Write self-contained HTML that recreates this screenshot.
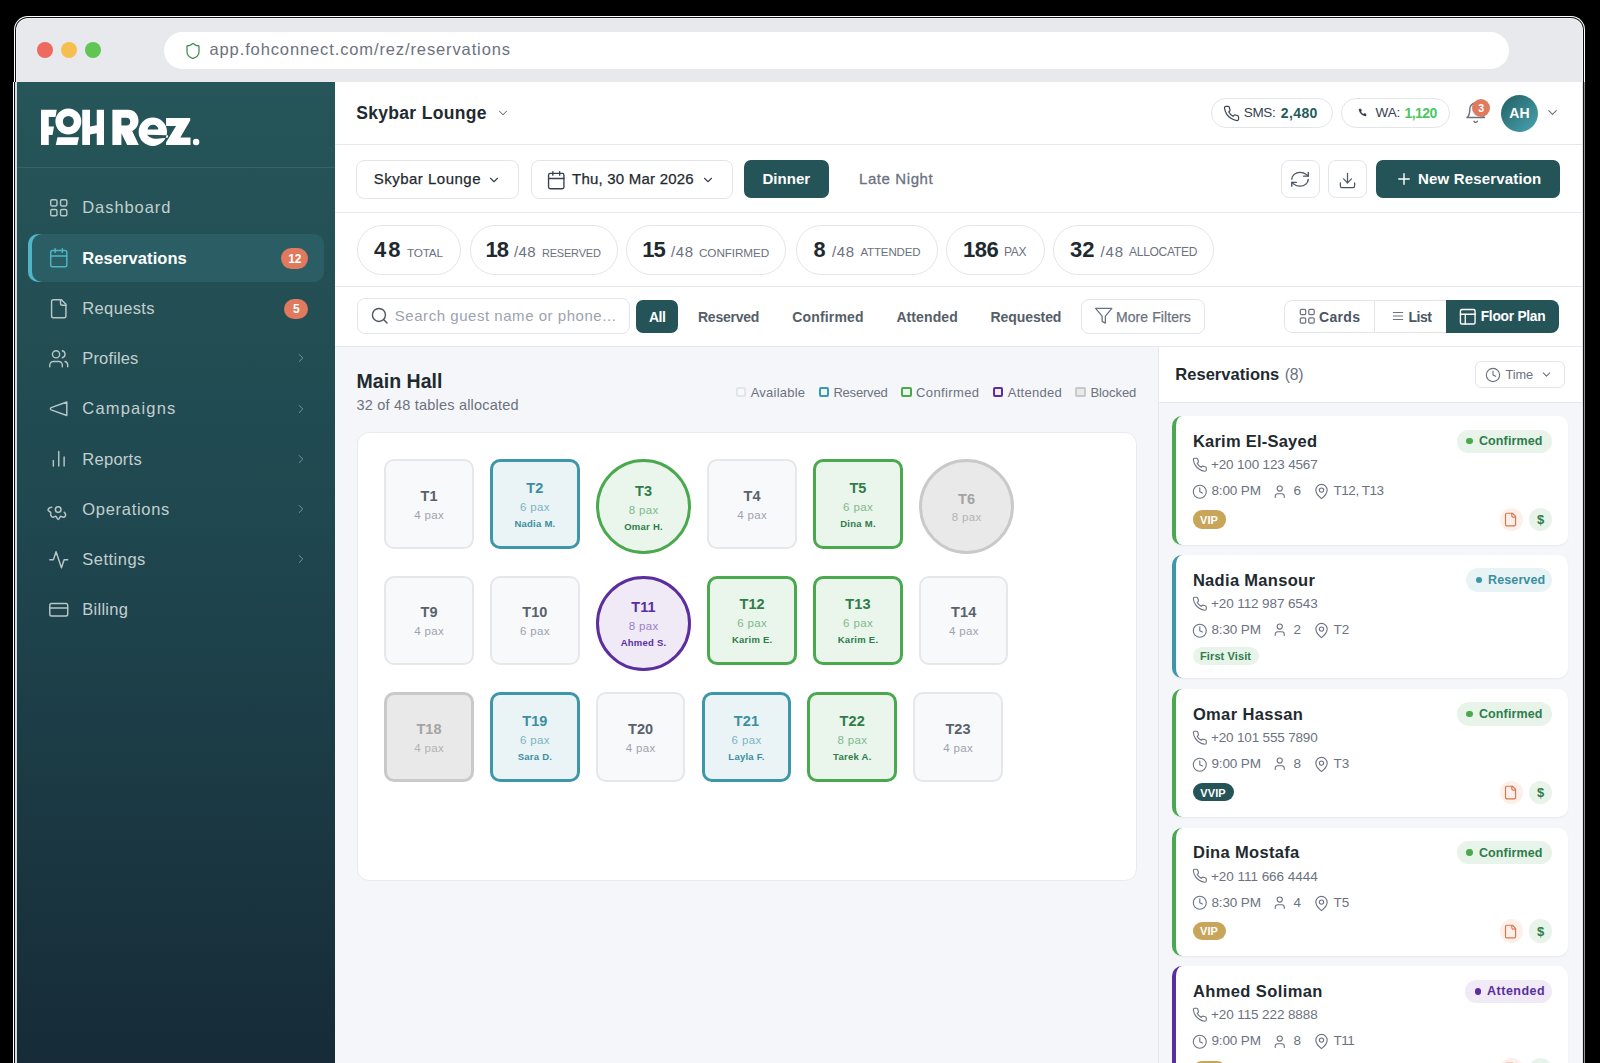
<!DOCTYPE html>
<html><head><meta charset="utf-8"><style>
html,body{margin:0;padding:0;}
body{width:1600px;height:1063px;overflow:hidden;background:#000;position:relative;font-family:"Liberation Sans", sans-serif;}
.t{position:absolute;white-space:nowrap;}
.b{position:absolute;}
svg.b{overflow:visible;}
</style></head><body>
<div class="b" style="left:14px;top:16px;width:1571px;height:1100px;border-radius:14px 14px 0 0;background:#fff;"></div>
<div class="b" style="left:15px;top:17px;width:1569px;height:1100px;border-radius:13px 13px 0 0;background:#111;"></div>
<div class="b" style="left:16px;top:18px;width:1567px;height:1100px;border-radius:12px 12px 0 0;background:#f1f2f5;"></div>
<div class="b" style="left:17px;top:19px;width:1565px;height:1100px;border-radius:11px 11px 0 0;background:#e8e9ed;"></div>
<div class="b" style="left:13px;top:82px;width:1px;height:1000px;background:#fff;"></div>
<div class="b" style="left:14px;top:82px;width:1px;height:1000px;background:#111;"></div>
<div class="b" style="left:15px;top:82px;width:2px;height:1000px;background:#d9dae3;"></div>
<div class="b" style="left:1584px;top:82px;width:1px;height:1000px;background:#9a9a9a;"></div>
<div class="b" style="left:1583px;top:82px;width:1px;height:1000px;background:#111;"></div>
<div class="b" style="left:1582px;top:82px;width:1px;height:1000px;background:#e3e5ea;"></div>
<div class="b" style="left:37px;top:42.4px;width:16px;height:16px;border-radius:50%;background:#ee6a5f;"></div>
<div class="b" style="left:61px;top:42.4px;width:16px;height:16px;border-radius:50%;background:#f5be4f;"></div>
<div class="b" style="left:85px;top:42.4px;width:16px;height:16px;border-radius:50%;background:#61c554;"></div>
<div class="b" style="left:164.2px;top:31.7px;width:1344.6px;height:37.4px;border-radius:18.7px;background:#fff;"></div>
<svg class="b" style="left:184px;top:42.2px;" width="18" height="18" viewBox="0 0 24 24" fill="none" stroke="#3f8f52" stroke-width="1.7" stroke-linecap="round" stroke-linejoin="round"><path d="M20 13c0 5-3.5 7.5-7.66 8.95a1 1 0 0 1-.67-.01C7.5 20.5 4 18 4 13V6a1 1 0 0 1 1-1c2 0 4.5-1.2 6.24-2.72a1.17 1.17 0 0 1 1.52 0C14.51 3.81 17 5 19 5a1 1 0 0 1 1 1z"/></svg>
<div class="t" style="left:209.50px;top:38.78px;font-size:16.5px;line-height:21px;color:#6b7280;font-weight:400;letter-spacing:0.881px;">app.fohconnect.com/rez/reservations</div>
<div class="b" style="left:17px;top:82px;width:318px;height:1000px;background:linear-gradient(180deg,#265659 0%,#1f474f 45%,#162a37 100%);"></div>
<div class="b" style="left:17px;top:167px;width:318px;height:1px;background:rgba(255,255,255,0.09);"></div>
<svg class="b" style="left:41px;top:109px" width="160" height="37" viewBox="0 0 160 37">
<g fill="#fff" fill-rule="evenodd">
<path d="M0 0.75H15.75L14.5 8H7.75V17.5H13L11.5 26H7.75V36H0Z"/>
<path d="M27.35 -0.45a12.95 12.95 0 1 1 0 25.9a12.95 12.95 0 1 1 0-25.9ZM27.35 7a5.5 5.5 0 1 0 0 11a5.5 5.5 0 1 0 0-11Z"/>
<path d="M16.5 28.25H38L36.25 36H14.75Z"/>
<path d="M41.25 0.75H49V17.5L55.75 16.3V0.75H63V36H55.75V24.3L49 25.5V36H41.25Z"/>
<path d="M71.4 0.7H87C93.5 0.7 97.5 5.5 97.5 12C97.5 16.5 95 20.3 91.2 22L97.8 36H86.2L80.4 24.3V36H71.4ZM80.4 8.8H85.3C87.9 8.8 89.2 10.4 89.2 12.7C89.2 15 87.9 16.6 85.3 16.6H80.4Z"/>
<path d="M111.8 8.5a14.2 14.2 0 1 1 0 28.4a14.2 14.2 0 1 1 0-28.4ZM106.6 20.4a5.4 4.6 0 0 1 10.8 0ZM106 25.8L127 26.3V28.6Q117 30.2 112 29.4Q108 28.7 106 25.8Z"/>
<path d="M125.1 9.1H149.2V11.5L139.3 28.5H149.5V36H125.1V33.3L135.1 16.9H125.1Z"/>
<circle cx="155.1" cy="33" r="3.25"/>
</g></svg>
<svg class="b" style="left:47.5px;top:197.0px;" width="21.5" height="21.5" viewBox="0 0 24 24" fill="none" stroke="#b9c6c6" stroke-width="1.6" stroke-linecap="round" stroke-linejoin="round"><rect x="3" y="3" width="7" height="7" rx="1.5"/><rect x="14" y="3" width="7" height="7" rx="1.5"/><rect x="14" y="14" width="7" height="7" rx="1.5"/><rect x="3" y="14" width="7" height="7" rx="1.5"/></svg>
<div class="t" style="left:82.30px;top:197.28px;font-size:16.5px;line-height:21px;color:#c3cfcf;font-weight:400;letter-spacing:0.912px;">Dashboard</div>
<div class="b" style="left:28px;top:234px;width:296px;height:48px;border-radius:10px;background:#2a5e64;box-shadow:inset 4px 0 0 #4fb6c9;"></div>
<svg class="b" style="left:47.5px;top:247.25px;" width="21.5" height="21.5" viewBox="0 0 24 24" fill="none" stroke="#4fb6c9" stroke-width="1.6" stroke-linecap="round" stroke-linejoin="round"><rect x="3" y="4" width="18" height="18" rx="2"/><path d="M16 2v4M8 2v4M3 10h18"/></svg>
<div class="t" style="left:82.30px;top:247.53px;font-size:16.5px;line-height:21px;color:#ffffff;font-weight:700;letter-spacing:0.077px;">Reservations</div>
<div class="b" style="left:281.3px;top:248.45px;width:27px;height:20.8px;border-radius:10.4px;background:#df7a5f;"></div>
<div class="t" style="left:-5.20px;width:600px;text-align:center;top:250.69px;font-size:12px;line-height:16px;color:#fff;font-weight:700;">12</div>
<svg class="b" style="left:47.5px;top:297.5px;" width="21.5" height="21.5" viewBox="0 0 24 24" fill="none" stroke="#b9c6c6" stroke-width="1.6" stroke-linecap="round" stroke-linejoin="round"><path d="M15 2H6a2 2 0 0 0-2 2v16a2 2 0 0 0 2 2h12a2 2 0 0 0 2-2V7Z"/><path d="M14 2v4a2 2 0 0 0 2 2h4"/></svg>
<div class="t" style="left:82.30px;top:297.78px;font-size:16.5px;line-height:21px;color:#c3cfcf;font-weight:400;letter-spacing:0.357px;">Requests</div>
<div class="b" style="left:284.3px;top:298.7px;width:24px;height:20.8px;border-radius:10.4px;background:#df7a5f;"></div>
<div class="t" style="left:-3.70px;width:600px;text-align:center;top:300.94px;font-size:12px;line-height:16px;color:#fff;font-weight:700;">5</div>
<svg class="b" style="left:47.5px;top:347.75px;" width="21.5" height="21.5" viewBox="0 0 24 24" fill="none" stroke="#b9c6c6" stroke-width="1.6" stroke-linecap="round" stroke-linejoin="round"><path d="M16 21v-2a4 4 0 0 0-4-4H6a4 4 0 0 0-4 4v2"/><circle cx="9" cy="7" r="4"/><path d="M22 21v-2a4 4 0 0 0-3-3.87"/><path d="M16 3.13a4 4 0 0 1 0 7.75"/></svg>
<div class="t" style="left:82.30px;top:348.03px;font-size:16.5px;line-height:21px;color:#c3cfcf;font-weight:400;letter-spacing:0.143px;">Profiles</div>
<svg class="b" style="left:293.5px;top:351.25px;" width="14" height="14" viewBox="0 0 24 24" fill="none" stroke="#7d9797" stroke-width="1.7" stroke-linecap="round" stroke-linejoin="round"><path d="m9 18 6-6-6-6"/></svg>
<svg class="b" style="left:47.5px;top:398.0px;" width="21.5" height="21.5" viewBox="0 0 24 24" fill="none" stroke="#b9c6c6" stroke-width="1.6" stroke-linecap="round" stroke-linejoin="round"><path d="M21 4.5v15L3.5 13.2a1.3 1.3 0 0 1 0-2.4Z"/></svg>
<div class="t" style="left:82.30px;top:398.28px;font-size:16.5px;line-height:21px;color:#c3cfcf;font-weight:400;letter-spacing:1.194px;">Campaigns</div>
<svg class="b" style="left:293.5px;top:401.5px;" width="14" height="14" viewBox="0 0 24 24" fill="none" stroke="#7d9797" stroke-width="1.7" stroke-linecap="round" stroke-linejoin="round"><path d="m9 18 6-6-6-6"/></svg>
<svg class="b" style="left:47.5px;top:448.25px;" width="21.5" height="21.5" viewBox="0 0 24 24" fill="none" stroke="#b9c6c6" stroke-width="1.6" stroke-linecap="round" stroke-linejoin="round"><path d="M18 20V10M12 20V4M6 20v-6"/></svg>
<div class="t" style="left:82.30px;top:448.53px;font-size:16.5px;line-height:21px;color:#c3cfcf;font-weight:400;letter-spacing:0.275px;">Reports</div>
<svg class="b" style="left:293.5px;top:451.75px;" width="14" height="14" viewBox="0 0 24 24" fill="none" stroke="#7d9797" stroke-width="1.7" stroke-linecap="round" stroke-linejoin="round"><path d="m9 18 6-6-6-6"/></svg>
<svg class="b" style="left:44px;top:500.3px" width="28" height="24" viewBox="0 0 28 24" fill="none" stroke="#b9c6c6" stroke-width="1.5" stroke-linecap="round" stroke-linejoin="round"><circle cx="14.2" cy="9.6" r="2.8"/><path d="M7.7 7.2C5.5 7.3 3.6 9 4.3 10.6C4.9 11.7 7.3 11.5 6.8 13.4C6.2 15.2 7.5 17.2 9 17.2C10.3 17.2 11 16.2 11.7 16.3C12.5 16.5 13.1 19.4 14.2 19.4C15.3 19.4 15.9 16.5 16.7 16.3C17.4 16.2 18.1 17.2 19.4 17.2C20.9 17.2 22.2 15.2 21.3 13.7C21 13.2 20.6 12.8 20.3 12.4"/></svg>
<div class="t" style="left:82.30px;top:498.78px;font-size:16.5px;line-height:21px;color:#c3cfcf;font-weight:400;letter-spacing:0.7px;">Operations</div>
<svg class="b" style="left:293.5px;top:502.0px;" width="14" height="14" viewBox="0 0 24 24" fill="none" stroke="#7d9797" stroke-width="1.7" stroke-linecap="round" stroke-linejoin="round"><path d="m9 18 6-6-6-6"/></svg>
<svg class="b" style="left:47.5px;top:548.75px;" width="21.5" height="21.5" viewBox="0 0 24 24" fill="none" stroke="#b9c6c6" stroke-width="1.6" stroke-linecap="round" stroke-linejoin="round"><path d="M22 12h-4l-3 9L9 3l-3 9H2"/></svg>
<div class="t" style="left:82.30px;top:549.03px;font-size:16.5px;line-height:21px;color:#c3cfcf;font-weight:400;letter-spacing:0.486px;">Settings</div>
<svg class="b" style="left:293.5px;top:552.25px;" width="14" height="14" viewBox="0 0 24 24" fill="none" stroke="#7d9797" stroke-width="1.7" stroke-linecap="round" stroke-linejoin="round"><path d="m9 18 6-6-6-6"/></svg>
<svg class="b" style="left:47.5px;top:599.0px;" width="21.5" height="21.5" viewBox="0 0 24 24" fill="none" stroke="#b9c6c6" stroke-width="1.6" stroke-linecap="round" stroke-linejoin="round"><rect x="2" y="5" width="20" height="14" rx="2"/><path d="M2 10h20"/></svg>
<div class="t" style="left:82.30px;top:599.28px;font-size:16.5px;line-height:21px;color:#c3cfcf;font-weight:400;letter-spacing:0.25px;">Billing</div>
<div class="b" style="left:335px;top:82px;width:1247px;height:1000px;background:#fff;"></div>
<div class="b" style="left:335px;top:144px;width:1247px;height:1px;background:#e6e8ec;"></div>
<div class="b" style="left:335px;top:212px;width:1247px;height:1px;background:#e6e8ec;"></div>
<div class="b" style="left:335px;top:286px;width:1247px;height:1px;background:#e6e8ec;"></div>
<div class="b" style="left:335px;top:346px;width:1247px;height:1px;background:#e6e8ec;"></div>
<div class="b" style="left:335px;top:347px;width:1247px;height:800px;background:#f5f6f9;"></div>
<div class="t" style="left:356.20px;top:102.04px;font-size:17.5px;line-height:23px;color:#1f2a30;font-weight:700;letter-spacing:0.325px;">Skybar Lounge</div>
<svg class="b" style="left:495.5px;top:106px;" width="14" height="14" viewBox="0 0 24 24" fill="none" stroke="#6b7280" stroke-width="1.8" stroke-linecap="round" stroke-linejoin="round"><path d="m6 9 6 6 6-6"/></svg>
<div class="b" style="left:1210.5px;top:98px;width:122px;height:30.2px;border-radius:15px;border:1px solid #e3e5e9;box-sizing:border-box;"></div>
<svg class="b" style="left:1223px;top:104.5px;" width="17" height="17" viewBox="0 0 24 24" fill="none" stroke="#374151" stroke-width="1.7" stroke-linecap="round" stroke-linejoin="round"><path d="M22 16.92v3a2 2 0 0 1-2.18 2 19.79 19.79 0 0 1-8.63-3.07 19.5 19.5 0 0 1-6-6 19.79 19.79 0 0 1-3.07-8.67A2 2 0 0 1 4.11 2h3a2 2 0 0 1 2 1.72 12.84 12.84 0 0 0 .7 2.81 2 2 0 0 1-.45 2.11L8.09 9.91a16 16 0 0 0 6 6l1.27-1.27a2 2 0 0 1 2.11-.45 12.84 12.84 0 0 0 2.81.7A2 2 0 0 1 22 16.92z"/></svg>
<div class="t" style="left:959.58px;width:600px;text-align:center;top:104.32px;font-size:13.5px;line-height:18px;color:#374151;font-weight:400;letter-spacing:-0.35px;">SMS:</div>
<div class="t" style="left:1280.80px;top:104.15px;font-size:14px;line-height:18px;color:#1f5c5c;font-weight:700;letter-spacing:0.388px;">2,480</div>
<div class="b" style="left:1341px;top:98px;width:109px;height:30.2px;border-radius:15px;border:1px solid #e3e5e9;box-sizing:border-box;"></div>
<svg class="b" style="left:1358px;top:108px" width="9" height="9" viewBox="0 0 24 24"><path fill="#374151" d="M22 16.92v3a2 2 0 0 1-2.18 2 19.79 19.79 0 0 1-8.63-3.07 19.5 19.5 0 0 1-6-6 19.79 19.79 0 0 1-3.07-8.67A2 2 0 0 1 4.11 2h3a2 2 0 0 1 2 1.72 12.84 12.84 0 0 0 .7 2.81 2 2 0 0 1-.45 2.11L8.09 9.91a16 16 0 0 0 6 6l1.27-1.27a2 2 0 0 1 2.11-.45 12.84 12.84 0 0 0 2.81.7A2 2 0 0 1 22 16.92z"/></svg>
<div class="t" style="left:1375.60px;top:104.32px;font-size:13.5px;line-height:18px;color:#374151;font-weight:400;letter-spacing:-0.15px;">WA:</div>
<div class="t" style="left:1120.60px;width:600px;text-align:center;top:104.15px;font-size:14px;line-height:18px;color:#4cc764;font-weight:700;letter-spacing:-0.6px;">1,120</div>
<svg class="b" style="left:1463.7px;top:101.3px;" width="23.3" height="23.3" viewBox="0 0 24 24" fill="none" stroke="#6b7280" stroke-width="1.5" stroke-linecap="round" stroke-linejoin="round"><path d="M6 8a6 6 0 0 1 12 0c0 7 3 9 3 9H3s3-2 3-9"/><path d="M10.3 21a1.94 1.94 0 0 0 3.4 0"/></svg>
<div class="b" style="left:1472px;top:98.8px;width:18.2px;height:18.2px;border-radius:50%;background:#df7a5f;"></div>
<div class="t" style="left:1181.10px;width:600px;text-align:center;top:101.36px;font-size:10.5px;line-height:14px;color:#fff;font-weight:700;">3</div>
<div class="b" style="left:1500.8px;top:94.8px;width:37.2px;height:37.2px;border-radius:50%;background:linear-gradient(135deg,#215e62 0%,#4aa5b2 100%);"></div>
<div class="t" style="left:1219.40px;width:600px;text-align:center;top:104.45px;font-size:14px;line-height:18px;color:#fff;font-weight:700;">AH</div>
<svg class="b" style="left:1545px;top:105px;" width="15" height="15" viewBox="0 0 24 24" fill="none" stroke="#6b7280" stroke-width="1.7" stroke-linecap="round" stroke-linejoin="round"><path d="m6 9 6 6 6-6"/></svg>
<div class="b" style="left:356.2px;top:159.5px;width:162.5px;height:39.3px;border-radius:8px;border:1px solid #e3e5e9;box-sizing:border-box;"></div>
<div class="t" style="left:373.70px;top:169.10px;font-size:15px;line-height:20px;color:#1f2a30;font-weight:400;letter-spacing:0.492px;-webkit-text-stroke:0.25px #1f2a30;">Skybar Lounge</div>
<svg class="b" style="left:487.3px;top:172.5px;" width="14" height="14" viewBox="0 0 24 24" fill="none" stroke="#374151" stroke-width="1.9" stroke-linecap="round" stroke-linejoin="round"><path d="m6 9 6 6 6-6"/></svg>
<div class="b" style="left:530.5px;top:159.5px;width:202px;height:39.3px;border-radius:8px;border:1px solid #e3e5e9;box-sizing:border-box;"></div>
<svg class="b" style="left:546.3px;top:170px;" width="20.5" height="20.5" viewBox="0 0 24 24" fill="none" stroke="#374151" stroke-width="1.6" stroke-linecap="round" stroke-linejoin="round"><rect x="3" y="4" width="18" height="18" rx="2"/><path d="M16 2v4M8 2v4M3 10h18"/></svg>
<div class="t" style="left:572.00px;top:169.10px;font-size:15px;line-height:20px;color:#1f2a30;font-weight:400;letter-spacing:0.22px;-webkit-text-stroke:0.25px #1f2a30;">Thu, 30 Mar 2026</div>
<svg class="b" style="left:701px;top:172.5px;" width="14" height="14" viewBox="0 0 24 24" fill="none" stroke="#374151" stroke-width="1.9" stroke-linecap="round" stroke-linejoin="round"><path d="m6 9 6 6 6-6"/></svg>
<div class="b" style="left:744px;top:160.2px;width:85px;height:37.4px;border-radius:7px;background:#245457;"></div>
<div class="t" style="left:762.40px;top:169.00px;font-size:15px;line-height:20px;color:#fff;font-weight:700;letter-spacing:0.06px;">Dinner</div>
<div class="t" style="left:859.00px;top:169.00px;font-size:15px;line-height:20px;color:#6b7280;font-weight:400;letter-spacing:0.589px;-webkit-text-stroke:0.3px #6b7280;">Late Night</div>
<div class="b" style="left:1280.7px;top:159.7px;width:39.1px;height:38.7px;border-radius:8px;border:1px solid #e3e5e9;box-sizing:border-box;"></div>
<svg class="b" style="left:1289px;top:170.2px" width="22" height="18.5" viewBox="0 0 24 24" preserveAspectRatio="none" fill="none" stroke="#4b5563" stroke-width="1.5" stroke-linecap="round" stroke-linejoin="round"><path d="M3 12a9 9 0 0 1 9-9 9.75 9.75 0 0 1 6.74 2.74L21 8"/><path d="M21 3v5h-5"/><path d="M21 12a9 9 0 0 1-9 9 9.75 9.75 0 0 1-6.74-2.74L3 16"/><path d="M8 16H3v5"/></svg>
<div class="b" style="left:1328px;top:159.7px;width:39.3px;height:38.7px;border-radius:8px;border:1px solid #e3e5e9;box-sizing:border-box;"></div>
<svg class="b" style="left:1338.3px;top:170.5px;" width="19" height="19" viewBox="0 0 24 24" fill="none" stroke="#4b5563" stroke-width="1.55" stroke-linecap="round" stroke-linejoin="round"><path d="M21 15v4a2 2 0 0 1-2 2H5a2 2 0 0 1-2-2v-4"/><path d="M7 10l5 5 5-5"/><path d="M12 15V3"/></svg>
<div class="b" style="left:1375.6px;top:160px;width:184.4px;height:37.9px;border-radius:7px;background:#245457;"></div>
<svg class="b" style="left:1394.5px;top:170px;" width="18" height="18" viewBox="0 0 24 24" fill="none" stroke="#fff" stroke-width="1.9" stroke-linecap="round" stroke-linejoin="round"><path d="M5 12h14M12 5v14"/></svg>
<div class="t" style="left:1418.00px;top:169.00px;font-size:15px;line-height:20px;color:#fff;font-weight:700;letter-spacing:0.171px;">New Reservation</div>
<div class="b" style="left:356.5px;top:224.5px;width:104.0px;height:50.2px;border-radius:25px;border:1px solid #e3e5e9;box-sizing:border-box;"></div>
<div class="t" style="left:374.00px;top:235.18px;font-size:22px;line-height:29px;color:#1f2a30;font-weight:700;letter-spacing:1.95px;">48</div>
<div class="t" style="left:407.00px;top:245.03px;font-size:11.75px;line-height:15px;color:#6b7280;font-weight:400;letter-spacing:-0.2px;">TOTAL</div>
<div class="b" style="left:469.5px;top:224.5px;width:148.20000000000005px;height:50.2px;border-radius:25px;border:1px solid #e3e5e9;box-sizing:border-box;"></div>
<div class="t" style="left:196.65px;width:600px;text-align:center;top:235.18px;font-size:22px;line-height:29px;color:#1f2a30;font-weight:700;letter-spacing:-1.0px;">18</div>
<div class="t" style="left:514.00px;top:242.10px;font-size:15px;line-height:20px;color:#6b7280;font-weight:400;letter-spacing:0.425px;">/48</div>
<div class="t" style="left:542.00px;top:245.79px;font-size:11.0px;line-height:14px;color:#6b7280;font-weight:400;letter-spacing:-0.214px;">RESERVED</div>
<div class="b" style="left:626.3px;top:224.5px;width:160.20000000000005px;height:50.2px;border-radius:25px;border:1px solid #e3e5e9;box-sizing:border-box;"></div>
<div class="t" style="left:353.45px;width:600px;text-align:center;top:235.18px;font-size:22px;line-height:29px;color:#1f2a30;font-weight:700;letter-spacing:-1.0px;">15</div>
<div class="t" style="left:671.00px;top:242.10px;font-size:15px;line-height:20px;color:#6b7280;font-weight:400;letter-spacing:0.575px;">/48</div>
<div class="t" style="left:699.00px;top:245.03px;font-size:11.75px;line-height:15px;color:#6b7280;font-weight:400;letter-spacing:-0.119px;">CONFIRMED</div>
<div class="b" style="left:795.8px;top:224.5px;width:141.9000000000001px;height:50.2px;border-radius:25px;border:1px solid #e3e5e9;box-sizing:border-box;"></div>
<div class="t" style="left:813.40px;top:235.76px;font-size:21.75px;line-height:28px;color:#1f2a30;font-weight:700;letter-spacing:-0.2px;">8</div>
<div class="t" style="left:832.00px;top:242.10px;font-size:15px;line-height:20px;color:#6b7280;font-weight:400;letter-spacing:0.575px;">/48</div>
<div class="t" style="left:860.40px;top:245.12px;font-size:11.5px;line-height:15px;color:#6b7280;font-weight:400;letter-spacing:-0.129px;">ATTENDED</div>
<div class="b" style="left:946px;top:224.5px;width:98.5px;height:50.2px;border-radius:25px;border:1px solid #e3e5e9;box-sizing:border-box;"></div>
<div class="t" style="left:680.55px;width:600px;text-align:center;top:235.18px;font-size:22px;line-height:29px;color:#1f2a30;font-weight:700;letter-spacing:-0.5px;">186</div>
<div class="t" style="left:1004.00px;top:244.44px;font-size:12px;line-height:16px;color:#6b7280;font-weight:400;letter-spacing:-0.25px;">PAX</div>
<div class="b" style="left:1053px;top:224.5px;width:161.4000000000001px;height:50.2px;border-radius:25px;border:1px solid #e3e5e9;box-sizing:border-box;"></div>
<div class="t" style="left:1070.00px;top:235.18px;font-size:22px;line-height:29px;color:#1f2a30;font-weight:700;letter-spacing:0.05px;">32</div>
<div class="t" style="left:1100.60px;top:242.10px;font-size:15px;line-height:20px;color:#6b7280;font-weight:400;letter-spacing:0.775px;">/48</div>
<div class="t" style="left:1129.00px;top:244.44px;font-size:12px;line-height:16px;color:#6b7280;font-weight:400;letter-spacing:-0.269px;">ALLOCATED</div>
<div class="b" style="left:356.5px;top:297.5px;width:273.7px;height:36.8px;border-radius:8px;border:1px solid #e3e5e9;box-sizing:border-box;"></div>
<svg class="b" style="left:369.5px;top:306.4px;" width="19.5" height="19.5" viewBox="0 0 24 24" fill="none" stroke="#4b5563" stroke-width="1.7" stroke-linecap="round" stroke-linejoin="round"><circle cx="11" cy="11" r="8"/><path d="m21 21-4.3-4.3"/></svg>
<div class="t" style="left:394.80px;top:306.10px;font-size:15px;line-height:20px;color:#9ca3af;font-weight:400;letter-spacing:0.538px;">Search guest name or phone...</div>
<div class="b" style="left:636.2px;top:300.4px;width:42.2px;height:32.3px;border-radius:7px;background:#245457;"></div>
<div class="t" style="left:357.20px;width:600px;text-align:center;top:307.65px;font-size:14px;line-height:18px;color:#fff;font-weight:700;letter-spacing:-0.5px;">All</div>
<div class="t" style="left:698.00px;top:307.65px;font-size:14px;line-height:18px;color:#555e69;font-weight:700;letter-spacing:-0.236px;">Reserved</div>
<div class="t" style="left:792.30px;top:307.65px;font-size:14px;line-height:18px;color:#555e69;font-weight:700;letter-spacing:0.15px;">Confirmed</div>
<div class="t" style="left:896.40px;top:307.65px;font-size:14px;line-height:18px;color:#555e69;font-weight:700;letter-spacing:0.093px;">Attended</div>
<div class="t" style="left:990.60px;top:307.65px;font-size:14px;line-height:18px;color:#555e69;font-weight:700;letter-spacing:-0.094px;">Requested</div>
<div class="b" style="left:1081px;top:299px;width:124.4px;height:34.7px;border-radius:8px;border:1px solid #e3e5e9;box-sizing:border-box;"></div>
<svg class="b" style="left:1093.5px;top:306.3px;" width="19.5" height="19.5" viewBox="0 0 24 24" fill="none" stroke="#6b7280" stroke-width="1.6" stroke-linecap="round" stroke-linejoin="round"><path d="M22 3H2l8 9.46V19l4 2v-8.54L22 3z"/></svg>
<div class="t" style="left:1116.00px;top:307.65px;font-size:14px;line-height:18px;color:#6b7280;font-weight:400;letter-spacing:0.082px;-webkit-text-stroke:0.25px #6b7280;">More Filters</div>
<div class="b" style="left:1284.3px;top:299.6px;width:275px;height:33.3px;border-radius:8px;border:1px solid #e3e5e9;box-sizing:border-box;overflow:hidden;"></div>
<div class="b" style="left:1374px;top:300px;width:1px;height:32.5px;background:#e3e5e9;"></div>
<div class="b" style="left:1446px;top:299.6px;width:113.3px;height:33.3px;border-radius:0 8px 8px 0;background:#245457;"></div>
<svg class="b" style="left:1298px;top:306.7px;" width="18.5" height="18.5" viewBox="0 0 24 24" fill="none" stroke="#6b7280" stroke-width="1.6" stroke-linecap="round" stroke-linejoin="round"><rect x="3" y="3" width="7" height="7" rx="1.5"/><rect x="14" y="3" width="7" height="7" rx="1.5"/><rect x="14" y="14" width="7" height="7" rx="1.5"/><rect x="3" y="14" width="7" height="7" rx="1.5"/></svg>
<div class="t" style="left:1319.00px;top:307.65px;font-size:14px;line-height:18px;color:#4b5563;font-weight:700;letter-spacing:0.325px;">Cards</div>
<svg class="b" style="left:1391px;top:309px;" width="14" height="14" viewBox="0 0 24 24" fill="none" stroke="#6b7280" stroke-width="1.8" stroke-linecap="round" stroke-linejoin="round"><path d="M4 6h16M4 12h16M4 18h16"/></svg>
<div class="t" style="left:1120.00px;width:600px;text-align:center;top:307.65px;font-size:14px;line-height:18px;color:#4b5563;font-weight:700;letter-spacing:-0.5px;">List</div>
<svg class="b" style="left:1457.5px;top:306.5px;" width="19.5" height="19.5" viewBox="0 0 24 24" fill="none" stroke="#fff" stroke-width="1.7" stroke-linecap="round" stroke-linejoin="round"><rect x="3" y="3" width="18" height="18" rx="2"/><path d="M3 9h18M9 21V9"/></svg>
<div class="t" style="left:1480.70px;top:307.74px;font-size:13.75px;line-height:18px;color:#fff;font-weight:700;letter-spacing:-0.25px;">Floor Plan</div>
<div class="t" style="left:356.60px;top:369.04px;font-size:19.5px;line-height:25px;color:#1f2a30;font-weight:700;letter-spacing:0.025px;">Main Hall</div>
<div class="t" style="left:356.60px;top:396.18px;font-size:14.5px;line-height:19px;color:#6b7280;font-weight:400;letter-spacing:0.196px;">32 of 48 tables allocated</div>
<div class="b" style="left:736px;top:387.3px;width:10.2px;height:10.2px;border-radius:2px;border:2px solid #e3e5e9;background:#f8f9fb;box-sizing:border-box;"></div>
<div class="b" style="left:818.7px;top:387.3px;width:10.2px;height:10.2px;border-radius:2px;border:2px solid #3d97a8;background:#eaf4f6;box-sizing:border-box;"></div>
<div class="b" style="left:901.4px;top:387.3px;width:10.2px;height:10.2px;border-radius:2px;border:2px solid #4aa84f;background:#eaf5ec;box-sizing:border-box;"></div>
<div class="b" style="left:992.7px;top:387.3px;width:10.2px;height:10.2px;border-radius:2px;border:2px solid #5b2d9e;background:#efeaf6;box-sizing:border-box;"></div>
<div class="b" style="left:1075.4px;top:387.3px;width:10.2px;height:10.2px;border-radius:2px;border:2px solid #c8c8c8;background:#e9e9e9;box-sizing:border-box;"></div>
<div class="t" style="left:750.70px;top:383.80px;font-size:13px;line-height:17px;color:#6b7280;font-weight:400;letter-spacing:0.225px;">Available</div>
<div class="t" style="left:833.40px;top:383.80px;font-size:13px;line-height:17px;color:#6b7280;font-weight:400;letter-spacing:-0.193px;">Reserved</div>
<div class="t" style="left:916.00px;top:383.80px;font-size:13px;line-height:17px;color:#6b7280;font-weight:400;letter-spacing:0.381px;">Confirmed</div>
<div class="t" style="left:1007.70px;top:383.80px;font-size:13px;line-height:17px;color:#6b7280;font-weight:400;letter-spacing:0.279px;">Attended</div>
<div class="t" style="left:1090.40px;top:383.80px;font-size:13px;line-height:17px;color:#6b7280;font-weight:400;letter-spacing:-0.058px;">Blocked</div>
<div class="b" style="left:356.6px;top:432px;width:780px;height:449px;border-radius:12px;background:#fff;border:1px solid #e8eaee;box-sizing:border-box;"></div>
<div class="b" style="left:384.2px;top:459.2px;width:89.6px;height:89.6px;border-radius:10px;border:2.5px solid #e5e7eb;background:#f8f9fb;box-sizing:border-box;"></div>
<div class="t" style="left:129.05px;width:600px;text-align:center;top:486.88px;font-size:14.5px;line-height:19px;color:#59626c;font-weight:700;letter-spacing:0.1px;">T1</div>
<div class="t" style="left:129.18px;width:600px;text-align:center;top:507.52px;font-size:11.5px;line-height:15px;color:#9ca3af;font-weight:400;letter-spacing:0.35px;">4 pax</div>
<div class="b" style="left:490.0px;top:459.2px;width:89.6px;height:89.6px;border-radius:10px;border:3px solid #3d97a8;background:#eaf4f6;box-sizing:border-box;"></div>
<div class="t" style="left:234.85px;width:600px;text-align:center;top:478.88px;font-size:14.5px;line-height:19px;color:#3b8fa0;font-weight:700;letter-spacing:0.1px;">T2</div>
<div class="t" style="left:234.97px;width:600px;text-align:center;top:499.72px;font-size:11.5px;line-height:15px;color:#7ab5c2;font-weight:400;letter-spacing:0.35px;">6 pax</div>
<div class="t" style="left:234.92px;width:600px;text-align:center;top:517.91px;font-size:9.5px;line-height:12px;color:#3b8fa0;font-weight:700;letter-spacing:0.25px;">Nadia M.</div>
<div class="b" style="left:595.8px;top:459.2px;width:95.3px;height:95.3px;border-radius:50%;border:3px solid #4aa84f;background:#eaf5ec;box-sizing:border-box;"></div>
<div class="t" style="left:343.50px;width:600px;text-align:center;top:481.73px;font-size:14.5px;line-height:19px;color:#2e7d4a;font-weight:700;letter-spacing:0.1px;">T3</div>
<div class="t" style="left:343.62px;width:600px;text-align:center;top:502.57px;font-size:11.5px;line-height:15px;color:#7fb98e;font-weight:400;letter-spacing:0.35px;">8 pax</div>
<div class="t" style="left:343.57px;width:600px;text-align:center;top:520.76px;font-size:9.5px;line-height:12px;color:#2e7d4a;font-weight:700;letter-spacing:0.25px;">Omar H.</div>
<div class="b" style="left:707.3px;top:459.2px;width:89.6px;height:89.6px;border-radius:10px;border:2.5px solid #e5e7eb;background:#f8f9fb;box-sizing:border-box;"></div>
<div class="t" style="left:452.15px;width:600px;text-align:center;top:486.88px;font-size:14.5px;line-height:19px;color:#59626c;font-weight:700;letter-spacing:0.1px;">T4</div>
<div class="t" style="left:452.27px;width:600px;text-align:center;top:507.52px;font-size:11.5px;line-height:15px;color:#9ca3af;font-weight:400;letter-spacing:0.35px;">4 pax</div>
<div class="b" style="left:813.0999999999999px;top:459.2px;width:89.6px;height:89.6px;border-radius:10px;border:3px solid #4aa84f;background:#eaf5ec;box-sizing:border-box;"></div>
<div class="t" style="left:557.95px;width:600px;text-align:center;top:478.88px;font-size:14.5px;line-height:19px;color:#2e7d4a;font-weight:700;letter-spacing:0.1px;">T5</div>
<div class="t" style="left:558.07px;width:600px;text-align:center;top:499.72px;font-size:11.5px;line-height:15px;color:#7fb98e;font-weight:400;letter-spacing:0.35px;">6 pax</div>
<div class="t" style="left:558.02px;width:600px;text-align:center;top:517.91px;font-size:9.5px;line-height:12px;color:#2e7d4a;font-weight:700;letter-spacing:0.25px;">Dina M.</div>
<div class="b" style="left:918.8999999999999px;top:459.2px;width:95.3px;height:95.3px;border-radius:50%;border:3px solid #c9c9c9;background:#e9e9e9;box-sizing:border-box;"></div>
<div class="t" style="left:666.60px;width:600px;text-align:center;top:489.73px;font-size:14.5px;line-height:19px;color:#a3a3a3;font-weight:700;letter-spacing:0.1px;">T6</div>
<div class="t" style="left:666.72px;width:600px;text-align:center;top:510.37px;font-size:11.5px;line-height:15px;color:#b3b3b3;font-weight:400;letter-spacing:0.35px;">8 pax</div>
<div class="b" style="left:384.2px;top:575.7px;width:89.6px;height:89.6px;border-radius:10px;border:2.5px solid #e5e7eb;background:#f8f9fb;box-sizing:border-box;"></div>
<div class="t" style="left:129.05px;width:600px;text-align:center;top:603.38px;font-size:14.5px;line-height:19px;color:#59626c;font-weight:700;letter-spacing:0.1px;">T9</div>
<div class="t" style="left:129.18px;width:600px;text-align:center;top:624.02px;font-size:11.5px;line-height:15px;color:#9ca3af;font-weight:400;letter-spacing:0.35px;">4 pax</div>
<div class="b" style="left:490.0px;top:575.7px;width:89.6px;height:89.6px;border-radius:10px;border:2.5px solid #e5e7eb;background:#f8f9fb;box-sizing:border-box;"></div>
<div class="t" style="left:234.85px;width:600px;text-align:center;top:603.38px;font-size:14.5px;line-height:19px;color:#59626c;font-weight:700;letter-spacing:0.1px;">T10</div>
<div class="t" style="left:234.97px;width:600px;text-align:center;top:624.02px;font-size:11.5px;line-height:15px;color:#9ca3af;font-weight:400;letter-spacing:0.35px;">6 pax</div>
<div class="b" style="left:595.8px;top:575.7px;width:95.3px;height:95.3px;border-radius:50%;border:3px solid #5b2d9e;background:#efeaf6;box-sizing:border-box;"></div>
<div class="t" style="left:343.50px;width:600px;text-align:center;top:598.23px;font-size:14.5px;line-height:19px;color:#5b2d9e;font-weight:700;letter-spacing:0.1px;">T11</div>
<div class="t" style="left:343.62px;width:600px;text-align:center;top:619.07px;font-size:11.5px;line-height:15px;color:#9b7fc8;font-weight:400;letter-spacing:0.35px;">8 pax</div>
<div class="t" style="left:343.57px;width:600px;text-align:center;top:637.26px;font-size:9.5px;line-height:12px;color:#5b2d9e;font-weight:700;letter-spacing:0.25px;">Ahmed S.</div>
<div class="b" style="left:707.3px;top:575.7px;width:89.6px;height:89.6px;border-radius:10px;border:3px solid #4aa84f;background:#eaf5ec;box-sizing:border-box;"></div>
<div class="t" style="left:452.15px;width:600px;text-align:center;top:595.38px;font-size:14.5px;line-height:19px;color:#2e7d4a;font-weight:700;letter-spacing:0.1px;">T12</div>
<div class="t" style="left:452.27px;width:600px;text-align:center;top:616.22px;font-size:11.5px;line-height:15px;color:#7fb98e;font-weight:400;letter-spacing:0.35px;">6 pax</div>
<div class="t" style="left:452.22px;width:600px;text-align:center;top:634.41px;font-size:9.5px;line-height:12px;color:#2e7d4a;font-weight:700;letter-spacing:0.25px;">Karim E.</div>
<div class="b" style="left:813.0999999999999px;top:575.7px;width:89.6px;height:89.6px;border-radius:10px;border:3px solid #4aa84f;background:#eaf5ec;box-sizing:border-box;"></div>
<div class="t" style="left:557.95px;width:600px;text-align:center;top:595.38px;font-size:14.5px;line-height:19px;color:#2e7d4a;font-weight:700;letter-spacing:0.1px;">T13</div>
<div class="t" style="left:558.07px;width:600px;text-align:center;top:616.22px;font-size:11.5px;line-height:15px;color:#7fb98e;font-weight:400;letter-spacing:0.35px;">6 pax</div>
<div class="t" style="left:558.02px;width:600px;text-align:center;top:634.41px;font-size:9.5px;line-height:12px;color:#2e7d4a;font-weight:700;letter-spacing:0.25px;">Karim E.</div>
<div class="b" style="left:918.8999999999999px;top:575.7px;width:89.6px;height:89.6px;border-radius:10px;border:2.5px solid #e5e7eb;background:#f8f9fb;box-sizing:border-box;"></div>
<div class="t" style="left:663.75px;width:600px;text-align:center;top:603.38px;font-size:14.5px;line-height:19px;color:#59626c;font-weight:700;letter-spacing:0.1px;">T14</div>
<div class="t" style="left:663.87px;width:600px;text-align:center;top:624.02px;font-size:11.5px;line-height:15px;color:#9ca3af;font-weight:400;letter-spacing:0.35px;">4 pax</div>
<div class="b" style="left:384.2px;top:692.2px;width:89.6px;height:89.6px;border-radius:10px;border:3px solid #c9c9c9;background:#e9e9e9;box-sizing:border-box;"></div>
<div class="t" style="left:129.05px;width:600px;text-align:center;top:719.88px;font-size:14.5px;line-height:19px;color:#a3a3a3;font-weight:700;letter-spacing:0.1px;">T18</div>
<div class="t" style="left:129.18px;width:600px;text-align:center;top:740.52px;font-size:11.5px;line-height:15px;color:#b3b3b3;font-weight:400;letter-spacing:0.35px;">4 pax</div>
<div class="b" style="left:490.0px;top:692.2px;width:89.6px;height:89.6px;border-radius:10px;border:3px solid #3d97a8;background:#eaf4f6;box-sizing:border-box;"></div>
<div class="t" style="left:234.85px;width:600px;text-align:center;top:711.88px;font-size:14.5px;line-height:19px;color:#3b8fa0;font-weight:700;letter-spacing:0.1px;">T19</div>
<div class="t" style="left:234.97px;width:600px;text-align:center;top:732.72px;font-size:11.5px;line-height:15px;color:#7ab5c2;font-weight:400;letter-spacing:0.35px;">6 pax</div>
<div class="t" style="left:234.92px;width:600px;text-align:center;top:750.91px;font-size:9.5px;line-height:12px;color:#3b8fa0;font-weight:700;letter-spacing:0.25px;">Sara D.</div>
<div class="b" style="left:595.8px;top:692.2px;width:89.6px;height:89.6px;border-radius:10px;border:2.5px solid #e5e7eb;background:#f8f9fb;box-sizing:border-box;"></div>
<div class="t" style="left:340.65px;width:600px;text-align:center;top:719.88px;font-size:14.5px;line-height:19px;color:#59626c;font-weight:700;letter-spacing:0.1px;">T20</div>
<div class="t" style="left:340.77px;width:600px;text-align:center;top:740.52px;font-size:11.5px;line-height:15px;color:#9ca3af;font-weight:400;letter-spacing:0.35px;">4 pax</div>
<div class="b" style="left:701.5999999999999px;top:692.2px;width:89.6px;height:89.6px;border-radius:10px;border:3px solid #3d97a8;background:#eaf4f6;box-sizing:border-box;"></div>
<div class="t" style="left:446.45px;width:600px;text-align:center;top:711.88px;font-size:14.5px;line-height:19px;color:#3b8fa0;font-weight:700;letter-spacing:0.1px;">T21</div>
<div class="t" style="left:446.57px;width:600px;text-align:center;top:732.72px;font-size:11.5px;line-height:15px;color:#7ab5c2;font-weight:400;letter-spacing:0.35px;">6 pax</div>
<div class="t" style="left:446.52px;width:600px;text-align:center;top:750.91px;font-size:9.5px;line-height:12px;color:#3b8fa0;font-weight:700;letter-spacing:0.25px;">Layla F.</div>
<div class="b" style="left:807.3999999999999px;top:692.2px;width:89.6px;height:89.6px;border-radius:10px;border:3px solid #4aa84f;background:#eaf5ec;box-sizing:border-box;"></div>
<div class="t" style="left:552.25px;width:600px;text-align:center;top:711.88px;font-size:14.5px;line-height:19px;color:#2e7d4a;font-weight:700;letter-spacing:0.1px;">T22</div>
<div class="t" style="left:552.37px;width:600px;text-align:center;top:732.72px;font-size:11.5px;line-height:15px;color:#7fb98e;font-weight:400;letter-spacing:0.35px;">8 pax</div>
<div class="t" style="left:552.32px;width:600px;text-align:center;top:750.91px;font-size:9.5px;line-height:12px;color:#2e7d4a;font-weight:700;letter-spacing:0.25px;">Tarek A.</div>
<div class="b" style="left:913.1999999999998px;top:692.2px;width:89.6px;height:89.6px;border-radius:10px;border:2.5px solid #e5e7eb;background:#f8f9fb;box-sizing:border-box;"></div>
<div class="t" style="left:658.05px;width:600px;text-align:center;top:719.88px;font-size:14.5px;line-height:19px;color:#59626c;font-weight:700;letter-spacing:0.1px;">T23</div>
<div class="t" style="left:658.17px;width:600px;text-align:center;top:740.52px;font-size:11.5px;line-height:15px;color:#9ca3af;font-weight:400;letter-spacing:0.35px;">4 pax</div>
<div class="b" style="left:1158px;top:347px;width:1px;height:800px;background:#e6e8ec;"></div>
<div class="b" style="left:1159px;top:347px;width:423px;height:55px;background:#fff;"></div>
<div class="b" style="left:1159px;top:401.5px;width:423px;height:1px;background:#e6e8ec;"></div>
<div class="t" style="left:1175.30px;top:364.48px;font-size:16.5px;line-height:21px;color:#1f2a30;font-weight:700;letter-spacing:0.032px;">Reservations</div>
<div class="t" style="left:1284.80px;top:365.24px;font-size:15.75px;line-height:20px;color:#6b7280;font-weight:400;letter-spacing:-0.275px;">(8)</div>
<div class="b" style="left:1474.5px;top:360.6px;width:90.2px;height:27.5px;border-radius:6px;border:1px solid #e3e5e9;box-sizing:border-box;"></div>
<svg class="b" style="left:1485.3px;top:366.5px;" width="16" height="16" viewBox="0 0 24 24" fill="none" stroke="#6b7280" stroke-width="1.7" stroke-linecap="round" stroke-linejoin="round"><circle cx="12" cy="12" r="10"/><path d="M12 6v6l4 2"/></svg>
<div class="t" style="left:1505.60px;top:366.08px;font-size:12.75px;line-height:17px;color:#6b7280;font-weight:400;letter-spacing:-0.15px;">Time</div>
<svg class="b" style="left:1539.5px;top:367.5px;" width="13" height="13" viewBox="0 0 24 24" fill="none" stroke="#6b7280" stroke-width="1.9" stroke-linecap="round" stroke-linejoin="round"><path d="m6 9 6 6 6-6"/></svg>
<div class="b" style="left:1172.2px;top:416.2px;width:395.8px;height:128.6px;border-radius:10px;background:#fff;border-left:4px solid #4aa84f;box-sizing:border-box;box-shadow:0 1px 2px rgba(16,24,40,0.06);"></div>
<div class="t" style="left:1192.90px;top:430.88px;font-size:16.5px;line-height:21px;color:#1f2a30;font-weight:700;letter-spacing:0.235px;">Karim El-Sayed</div>
<div class="b" style="left:1457.1px;top:429.5px;width:95.2px;height:23.3px;border-radius:12px;background:#e8f4ea;"></div>
<div class="b" style="left:1466.3999999999999px;top:437.7px;width:6.8px;height:6.8px;border-radius:50%;background:#4aa84f;"></div>
<div class="t" style="left:1478.90px;top:433.27px;font-size:12.5px;line-height:16px;color:#2e7d4a;font-weight:700;letter-spacing:0.138px;">Confirmed</div>
<svg class="b" style="left:1191.9px;top:456.8px;" width="15.6" height="15.6" viewBox="0 0 24 24" fill="none" stroke="#6b7280" stroke-width="1.7" stroke-linecap="round" stroke-linejoin="round"><path d="M22 16.92v3a2 2 0 0 1-2.18 2 19.79 19.79 0 0 1-8.63-3.07 19.5 19.5 0 0 1-6-6 19.79 19.79 0 0 1-3.07-8.67A2 2 0 0 1 4.11 2h3a2 2 0 0 1 2 1.72 12.84 12.84 0 0 0 .7 2.81 2 2 0 0 1-.45 2.11L8.09 9.91a16 16 0 0 0 6 6l1.27-1.27a2 2 0 0 1 2.11-.45 12.84 12.84 0 0 0 2.81.7A2 2 0 0 1 22 16.92z"/></svg>
<div class="t" style="left:1211.00px;top:456.02px;font-size:13.5px;line-height:18px;color:#6b7280;font-weight:400;letter-spacing:-0.17px;">+20 100 123 4567</div>
<svg class="b" style="left:1191.7px;top:483.7px;" width="15.6" height="15.6" viewBox="0 0 24 24" fill="none" stroke="#6b7280" stroke-width="1.7" stroke-linecap="round" stroke-linejoin="round"><circle cx="12" cy="12" r="10"/><path d="M12 6v6l4 2"/></svg>
<div class="t" style="left:1211.50px;top:481.92px;font-size:13.5px;line-height:18px;color:#6b7280;font-weight:400;letter-spacing:-0.15px;">8:00 PM</div>
<svg class="b" style="left:1271.8px;top:483.5px;" width="15.5" height="15.5" viewBox="0 0 24 24" fill="none" stroke="#6b7280" stroke-width="1.7" stroke-linecap="round" stroke-linejoin="round"><path d="M19 21v-2a4 4 0 0 0-4-4H9a4 4 0 0 0-4 4v2"/><circle cx="12" cy="7" r="4"/></svg>
<div class="t" style="left:1293.60px;top:481.92px;font-size:13.5px;line-height:18px;color:#6b7280;font-weight:400;">6</div>
<svg class="b" style="left:1313.1px;top:482.9px;" width="17" height="17" viewBox="0 0 24 24" fill="none" stroke="#6b7280" stroke-width="1.6" stroke-linecap="round" stroke-linejoin="round"><path d="M20 10c0 6-8 12-8 12s-8-6-8-12a8 8 0 0 1 16 0Z"/><circle cx="12" cy="10" r="3"/></svg>
<div class="t" style="left:1333.50px;top:481.92px;font-size:13.5px;line-height:18px;color:#6b7280;font-weight:400;letter-spacing:-0.45px;">T12, T13</div>
<div class="b" style="left:1192.5px;top:510.4px;width:33px;height:18.2px;border-radius:9px;background:#c9a55a;"></div>
<div class="t" style="left:909.05px;width:600px;text-align:center;top:512.89px;font-size:11px;line-height:14px;color:#fff;font-weight:700;letter-spacing:0.1px;">VIP</div>
<div class="b" style="left:1499.6px;top:507.79999999999995px;width:23.7px;height:23.7px;border-radius:50%;background:#fdf0ea;"></div>
<svg class="b" style="left:1503.4px;top:512.1px;" width="15.1" height="15.1" viewBox="0 0 24 24" fill="none" stroke="#d9774f" stroke-width="1.9" stroke-linecap="round" stroke-linejoin="round"><path d="M15 2H6a2 2 0 0 0-2 2v16a2 2 0 0 0 2 2h12a2 2 0 0 0 2-2V7Z"/><path d="M14 2v4a2 2 0 0 0 2 2h4"/></svg>
<div class="b" style="left:1528.8px;top:507.79999999999995px;width:23.7px;height:23.7px;border-radius:50%;background:#e8f4ea;"></div>
<div class="t" style="left:1240.60px;width:600px;text-align:center;top:511.20px;font-size:13px;line-height:17px;color:#2e7d4a;font-weight:700;">$</div>
<div class="b" style="left:1172.2px;top:555.1px;width:395.8px;height:123.2px;border-radius:10px;background:#fff;border-left:4px solid #3d97a8;box-sizing:border-box;box-shadow:0 1px 2px rgba(16,24,40,0.06);"></div>
<div class="t" style="left:1192.90px;top:569.78px;font-size:16.5px;line-height:21px;color:#1f2a30;font-weight:700;letter-spacing:0.312px;">Nadia Mansour</div>
<div class="b" style="left:1466.3px;top:568.4px;width:86px;height:23.3px;border-radius:12px;background:#e8f3f5;"></div>
<div class="b" style="left:1475.6px;top:576.6px;width:6.8px;height:6.8px;border-radius:50%;background:#3b97a8;"></div>
<div class="t" style="left:1488.10px;top:572.17px;font-size:12.5px;line-height:16px;color:#3b8fa0;font-weight:700;letter-spacing:0.1px;">Reserved</div>
<svg class="b" style="left:1191.9px;top:595.7px;" width="15.6" height="15.6" viewBox="0 0 24 24" fill="none" stroke="#6b7280" stroke-width="1.7" stroke-linecap="round" stroke-linejoin="round"><path d="M22 16.92v3a2 2 0 0 1-2.18 2 19.79 19.79 0 0 1-8.63-3.07 19.5 19.5 0 0 1-6-6 19.79 19.79 0 0 1-3.07-8.67A2 2 0 0 1 4.11 2h3a2 2 0 0 1 2 1.72 12.84 12.84 0 0 0 .7 2.81 2 2 0 0 1-.45 2.11L8.09 9.91a16 16 0 0 0 6 6l1.27-1.27a2 2 0 0 1 2.11-.45 12.84 12.84 0 0 0 2.81.7A2 2 0 0 1 22 16.92z"/></svg>
<div class="t" style="left:1211.00px;top:594.92px;font-size:13.5px;line-height:18px;color:#6b7280;font-weight:400;letter-spacing:-0.103px;">+20 112 987 6543</div>
<svg class="b" style="left:1191.7px;top:622.6px;" width="15.6" height="15.6" viewBox="0 0 24 24" fill="none" stroke="#6b7280" stroke-width="1.7" stroke-linecap="round" stroke-linejoin="round"><circle cx="12" cy="12" r="10"/><path d="M12 6v6l4 2"/></svg>
<div class="t" style="left:1211.50px;top:620.82px;font-size:13.5px;line-height:18px;color:#6b7280;font-weight:400;letter-spacing:-0.15px;">8:30 PM</div>
<svg class="b" style="left:1271.8px;top:622.4px;" width="15.5" height="15.5" viewBox="0 0 24 24" fill="none" stroke="#6b7280" stroke-width="1.7" stroke-linecap="round" stroke-linejoin="round"><path d="M19 21v-2a4 4 0 0 0-4-4H9a4 4 0 0 0-4 4v2"/><circle cx="12" cy="7" r="4"/></svg>
<div class="t" style="left:1293.60px;top:620.82px;font-size:13.5px;line-height:18px;color:#6b7280;font-weight:400;">2</div>
<svg class="b" style="left:1313.1px;top:621.8000000000001px;" width="17" height="17" viewBox="0 0 24 24" fill="none" stroke="#6b7280" stroke-width="1.6" stroke-linecap="round" stroke-linejoin="round"><path d="M20 10c0 6-8 12-8 12s-8-6-8-12a8 8 0 0 1 16 0Z"/><circle cx="12" cy="10" r="3"/></svg>
<div class="t" style="left:1333.50px;top:620.82px;font-size:13.5px;line-height:18px;color:#6b7280;font-weight:400;">T2</div>
<div class="b" style="left:1192.5px;top:647.0px;width:66px;height:18.2px;border-radius:9px;background:#e8f4ea;"></div>
<div class="t" style="left:925.55px;width:600px;text-align:center;top:649.49px;font-size:11px;line-height:14px;color:#2e7d4a;font-weight:700;letter-spacing:0.1px;">First Visit</div>
<div class="b" style="left:1172.2px;top:689.1px;width:395.8px;height:128.2px;border-radius:10px;background:#fff;border-left:4px solid #4aa84f;box-sizing:border-box;box-shadow:0 1px 2px rgba(16,24,40,0.06);"></div>
<div class="t" style="left:1192.90px;top:703.78px;font-size:16.5px;line-height:21px;color:#1f2a30;font-weight:700;letter-spacing:0.36px;">Omar Hassan</div>
<div class="b" style="left:1457.1px;top:702.4px;width:95.2px;height:23.3px;border-radius:12px;background:#e8f4ea;"></div>
<div class="b" style="left:1466.3999999999999px;top:710.6px;width:6.8px;height:6.8px;border-radius:50%;background:#4aa84f;"></div>
<div class="t" style="left:1478.90px;top:706.17px;font-size:12.5px;line-height:16px;color:#2e7d4a;font-weight:700;letter-spacing:0.138px;">Confirmed</div>
<svg class="b" style="left:1191.9px;top:729.7px;" width="15.6" height="15.6" viewBox="0 0 24 24" fill="none" stroke="#6b7280" stroke-width="1.7" stroke-linecap="round" stroke-linejoin="round"><path d="M22 16.92v3a2 2 0 0 1-2.18 2 19.79 19.79 0 0 1-8.63-3.07 19.5 19.5 0 0 1-6-6 19.79 19.79 0 0 1-3.07-8.67A2 2 0 0 1 4.11 2h3a2 2 0 0 1 2 1.72 12.84 12.84 0 0 0 .7 2.81 2 2 0 0 1-.45 2.11L8.09 9.91a16 16 0 0 0 6 6l1.27-1.27a2 2 0 0 1 2.11-.45 12.84 12.84 0 0 0 2.81.7A2 2 0 0 1 22 16.92z"/></svg>
<div class="t" style="left:1211.00px;top:728.92px;font-size:13.5px;line-height:18px;color:#6b7280;font-weight:400;letter-spacing:-0.17px;">+20 101 555 7890</div>
<svg class="b" style="left:1191.7px;top:756.6px;" width="15.6" height="15.6" viewBox="0 0 24 24" fill="none" stroke="#6b7280" stroke-width="1.7" stroke-linecap="round" stroke-linejoin="round"><circle cx="12" cy="12" r="10"/><path d="M12 6v6l4 2"/></svg>
<div class="t" style="left:1211.50px;top:754.82px;font-size:13.5px;line-height:18px;color:#6b7280;font-weight:400;letter-spacing:-0.15px;">9:00 PM</div>
<svg class="b" style="left:1271.8px;top:756.4px;" width="15.5" height="15.5" viewBox="0 0 24 24" fill="none" stroke="#6b7280" stroke-width="1.7" stroke-linecap="round" stroke-linejoin="round"><path d="M19 21v-2a4 4 0 0 0-4-4H9a4 4 0 0 0-4 4v2"/><circle cx="12" cy="7" r="4"/></svg>
<div class="t" style="left:1293.60px;top:754.82px;font-size:13.5px;line-height:18px;color:#6b7280;font-weight:400;">8</div>
<svg class="b" style="left:1313.1px;top:755.8000000000001px;" width="17" height="17" viewBox="0 0 24 24" fill="none" stroke="#6b7280" stroke-width="1.6" stroke-linecap="round" stroke-linejoin="round"><path d="M20 10c0 6-8 12-8 12s-8-6-8-12a8 8 0 0 1 16 0Z"/><circle cx="12" cy="10" r="3"/></svg>
<div class="t" style="left:1333.50px;top:754.82px;font-size:13.5px;line-height:18px;color:#6b7280;font-weight:400;">T3</div>
<div class="b" style="left:1192.5px;top:783.3000000000001px;width:41px;height:18.2px;border-radius:9px;background:#245457;"></div>
<div class="t" style="left:913.05px;width:600px;text-align:center;top:785.79px;font-size:11px;line-height:14px;color:#fff;font-weight:700;letter-spacing:0.1px;">VVIP</div>
<div class="b" style="left:1499.6px;top:780.7px;width:23.7px;height:23.7px;border-radius:50%;background:#fdf0ea;"></div>
<svg class="b" style="left:1503.4px;top:785.0px;" width="15.1" height="15.1" viewBox="0 0 24 24" fill="none" stroke="#d9774f" stroke-width="1.9" stroke-linecap="round" stroke-linejoin="round"><path d="M15 2H6a2 2 0 0 0-2 2v16a2 2 0 0 0 2 2h12a2 2 0 0 0 2-2V7Z"/><path d="M14 2v4a2 2 0 0 0 2 2h4"/></svg>
<div class="b" style="left:1528.8px;top:780.7px;width:23.7px;height:23.7px;border-radius:50%;background:#e8f4ea;"></div>
<div class="t" style="left:1240.60px;width:600px;text-align:center;top:784.10px;font-size:13px;line-height:17px;color:#2e7d4a;font-weight:700;">$</div>
<div class="b" style="left:1172.2px;top:827.8px;width:395.8px;height:128.2px;border-radius:10px;background:#fff;border-left:4px solid #4aa84f;box-sizing:border-box;box-shadow:0 1px 2px rgba(16,24,40,0.06);"></div>
<div class="t" style="left:1192.90px;top:842.48px;font-size:16.5px;line-height:21px;color:#1f2a30;font-weight:700;letter-spacing:0.336px;">Dina Mostafa</div>
<div class="b" style="left:1457.1px;top:841.0999999999999px;width:95.2px;height:23.3px;border-radius:12px;background:#e8f4ea;"></div>
<div class="b" style="left:1466.3999999999999px;top:849.3px;width:6.8px;height:6.8px;border-radius:50%;background:#4aa84f;"></div>
<div class="t" style="left:1478.90px;top:844.87px;font-size:12.5px;line-height:16px;color:#2e7d4a;font-weight:700;letter-spacing:0.138px;">Confirmed</div>
<svg class="b" style="left:1191.9px;top:868.4px;" width="15.6" height="15.6" viewBox="0 0 24 24" fill="none" stroke="#6b7280" stroke-width="1.7" stroke-linecap="round" stroke-linejoin="round"><path d="M22 16.92v3a2 2 0 0 1-2.18 2 19.79 19.79 0 0 1-8.63-3.07 19.5 19.5 0 0 1-6-6 19.79 19.79 0 0 1-3.07-8.67A2 2 0 0 1 4.11 2h3a2 2 0 0 1 2 1.72 12.84 12.84 0 0 0 .7 2.81 2 2 0 0 1-.45 2.11L8.09 9.91a16 16 0 0 0 6 6l1.27-1.27a2 2 0 0 1 2.11-.45 12.84 12.84 0 0 0 2.81.7A2 2 0 0 1 22 16.92z"/></svg>
<div class="t" style="left:1211.00px;top:867.62px;font-size:13.5px;line-height:18px;color:#6b7280;font-weight:400;letter-spacing:-0.037px;">+20 111 666 4444</div>
<svg class="b" style="left:1191.7px;top:895.3px;" width="15.6" height="15.6" viewBox="0 0 24 24" fill="none" stroke="#6b7280" stroke-width="1.7" stroke-linecap="round" stroke-linejoin="round"><circle cx="12" cy="12" r="10"/><path d="M12 6v6l4 2"/></svg>
<div class="t" style="left:1211.50px;top:893.52px;font-size:13.5px;line-height:18px;color:#6b7280;font-weight:400;letter-spacing:-0.15px;">8:30 PM</div>
<svg class="b" style="left:1271.8px;top:895.0999999999999px;" width="15.5" height="15.5" viewBox="0 0 24 24" fill="none" stroke="#6b7280" stroke-width="1.7" stroke-linecap="round" stroke-linejoin="round"><path d="M19 21v-2a4 4 0 0 0-4-4H9a4 4 0 0 0-4 4v2"/><circle cx="12" cy="7" r="4"/></svg>
<div class="t" style="left:1293.60px;top:893.52px;font-size:13.5px;line-height:18px;color:#6b7280;font-weight:400;">4</div>
<svg class="b" style="left:1313.1px;top:894.5px;" width="17" height="17" viewBox="0 0 24 24" fill="none" stroke="#6b7280" stroke-width="1.6" stroke-linecap="round" stroke-linejoin="round"><path d="M20 10c0 6-8 12-8 12s-8-6-8-12a8 8 0 0 1 16 0Z"/><circle cx="12" cy="10" r="3"/></svg>
<div class="t" style="left:1333.50px;top:893.52px;font-size:13.5px;line-height:18px;color:#6b7280;font-weight:400;">T5</div>
<div class="b" style="left:1192.5px;top:922.0px;width:33px;height:18.2px;border-radius:9px;background:#c9a55a;"></div>
<div class="t" style="left:909.05px;width:600px;text-align:center;top:924.49px;font-size:11px;line-height:14px;color:#fff;font-weight:700;letter-spacing:0.1px;">VIP</div>
<div class="b" style="left:1499.6px;top:919.4px;width:23.7px;height:23.7px;border-radius:50%;background:#fdf0ea;"></div>
<svg class="b" style="left:1503.4px;top:923.6999999999999px;" width="15.1" height="15.1" viewBox="0 0 24 24" fill="none" stroke="#d9774f" stroke-width="1.9" stroke-linecap="round" stroke-linejoin="round"><path d="M15 2H6a2 2 0 0 0-2 2v16a2 2 0 0 0 2 2h12a2 2 0 0 0 2-2V7Z"/><path d="M14 2v4a2 2 0 0 0 2 2h4"/></svg>
<div class="b" style="left:1528.8px;top:919.4px;width:23.7px;height:23.7px;border-radius:50%;background:#e8f4ea;"></div>
<div class="t" style="left:1240.60px;width:600px;text-align:center;top:922.80px;font-size:13px;line-height:17px;color:#2e7d4a;font-weight:700;">$</div>
<div class="b" style="left:1172.2px;top:966.4px;width:395.8px;height:128.2px;border-radius:10px;background:#fff;border-left:4px solid #5b2d9e;box-sizing:border-box;box-shadow:0 1px 2px rgba(16,24,40,0.06);"></div>
<div class="t" style="left:1192.90px;top:981.08px;font-size:16.5px;line-height:21px;color:#1f2a30;font-weight:700;letter-spacing:0.4px;">Ahmed Soliman</div>
<div class="b" style="left:1465.3px;top:979.6999999999999px;width:87px;height:23.3px;border-radius:12px;background:#efeaf6;"></div>
<div class="b" style="left:1474.6px;top:987.9px;width:6.8px;height:6.8px;border-radius:50%;background:#5b2d9e;"></div>
<div class="t" style="left:1487.10px;top:983.47px;font-size:12.5px;line-height:16px;color:#5b2d9e;font-weight:700;letter-spacing:0.479px;">Attended</div>
<svg class="b" style="left:1191.9px;top:1007.0px;" width="15.6" height="15.6" viewBox="0 0 24 24" fill="none" stroke="#6b7280" stroke-width="1.7" stroke-linecap="round" stroke-linejoin="round"><path d="M22 16.92v3a2 2 0 0 1-2.18 2 19.79 19.79 0 0 1-8.63-3.07 19.5 19.5 0 0 1-6-6 19.79 19.79 0 0 1-3.07-8.67A2 2 0 0 1 4.11 2h3a2 2 0 0 1 2 1.72 12.84 12.84 0 0 0 .7 2.81 2 2 0 0 1-.45 2.11L8.09 9.91a16 16 0 0 0 6 6l1.27-1.27a2 2 0 0 1 2.11-.45 12.84 12.84 0 0 0 2.81.7A2 2 0 0 1 22 16.92z"/></svg>
<div class="t" style="left:1211.00px;top:1006.22px;font-size:13.5px;line-height:18px;color:#6b7280;font-weight:400;letter-spacing:-0.103px;">+20 115 222 8888</div>
<svg class="b" style="left:1191.7px;top:1033.9px;" width="15.6" height="15.6" viewBox="0 0 24 24" fill="none" stroke="#6b7280" stroke-width="1.7" stroke-linecap="round" stroke-linejoin="round"><circle cx="12" cy="12" r="10"/><path d="M12 6v6l4 2"/></svg>
<div class="t" style="left:1211.50px;top:1032.12px;font-size:13.5px;line-height:18px;color:#6b7280;font-weight:400;letter-spacing:-0.15px;">9:00 PM</div>
<svg class="b" style="left:1271.8px;top:1033.7px;" width="15.5" height="15.5" viewBox="0 0 24 24" fill="none" stroke="#6b7280" stroke-width="1.7" stroke-linecap="round" stroke-linejoin="round"><path d="M19 21v-2a4 4 0 0 0-4-4H9a4 4 0 0 0-4 4v2"/><circle cx="12" cy="7" r="4"/></svg>
<div class="t" style="left:1293.60px;top:1032.12px;font-size:13.5px;line-height:18px;color:#6b7280;font-weight:400;">8</div>
<svg class="b" style="left:1313.1px;top:1033.1px;" width="17" height="17" viewBox="0 0 24 24" fill="none" stroke="#6b7280" stroke-width="1.6" stroke-linecap="round" stroke-linejoin="round"><path d="M20 10c0 6-8 12-8 12s-8-6-8-12a8 8 0 0 1 16 0Z"/><circle cx="12" cy="10" r="3"/></svg>
<div class="t" style="left:1333.50px;top:1032.12px;font-size:13.5px;line-height:18px;color:#6b7280;font-weight:400;letter-spacing:-0.45px;">T11</div>
<div class="b" style="left:1192.5px;top:1060.6px;width:33px;height:18.2px;border-radius:9px;background:#c9a55a;"></div>
<div class="t" style="left:909.05px;width:600px;text-align:center;top:1063.09px;font-size:11px;line-height:14px;color:#fff;font-weight:700;letter-spacing:0.1px;">VIP</div>
<div class="b" style="left:1499.6px;top:1058.0px;width:23.7px;height:23.7px;border-radius:50%;background:#fdf0ea;"></div>
<svg class="b" style="left:1503.4px;top:1062.3px;" width="15.1" height="15.1" viewBox="0 0 24 24" fill="none" stroke="#d9774f" stroke-width="1.9" stroke-linecap="round" stroke-linejoin="round"><path d="M15 2H6a2 2 0 0 0-2 2v16a2 2 0 0 0 2 2h12a2 2 0 0 0 2-2V7Z"/><path d="M14 2v4a2 2 0 0 0 2 2h4"/></svg>
<div class="b" style="left:1528.8px;top:1058.0px;width:23.7px;height:23.7px;border-radius:50%;background:#e8f4ea;"></div>
<div class="t" style="left:1240.60px;width:600px;text-align:center;top:1061.40px;font-size:13px;line-height:17px;color:#2e7d4a;font-weight:700;">$</div>
</body></html>
